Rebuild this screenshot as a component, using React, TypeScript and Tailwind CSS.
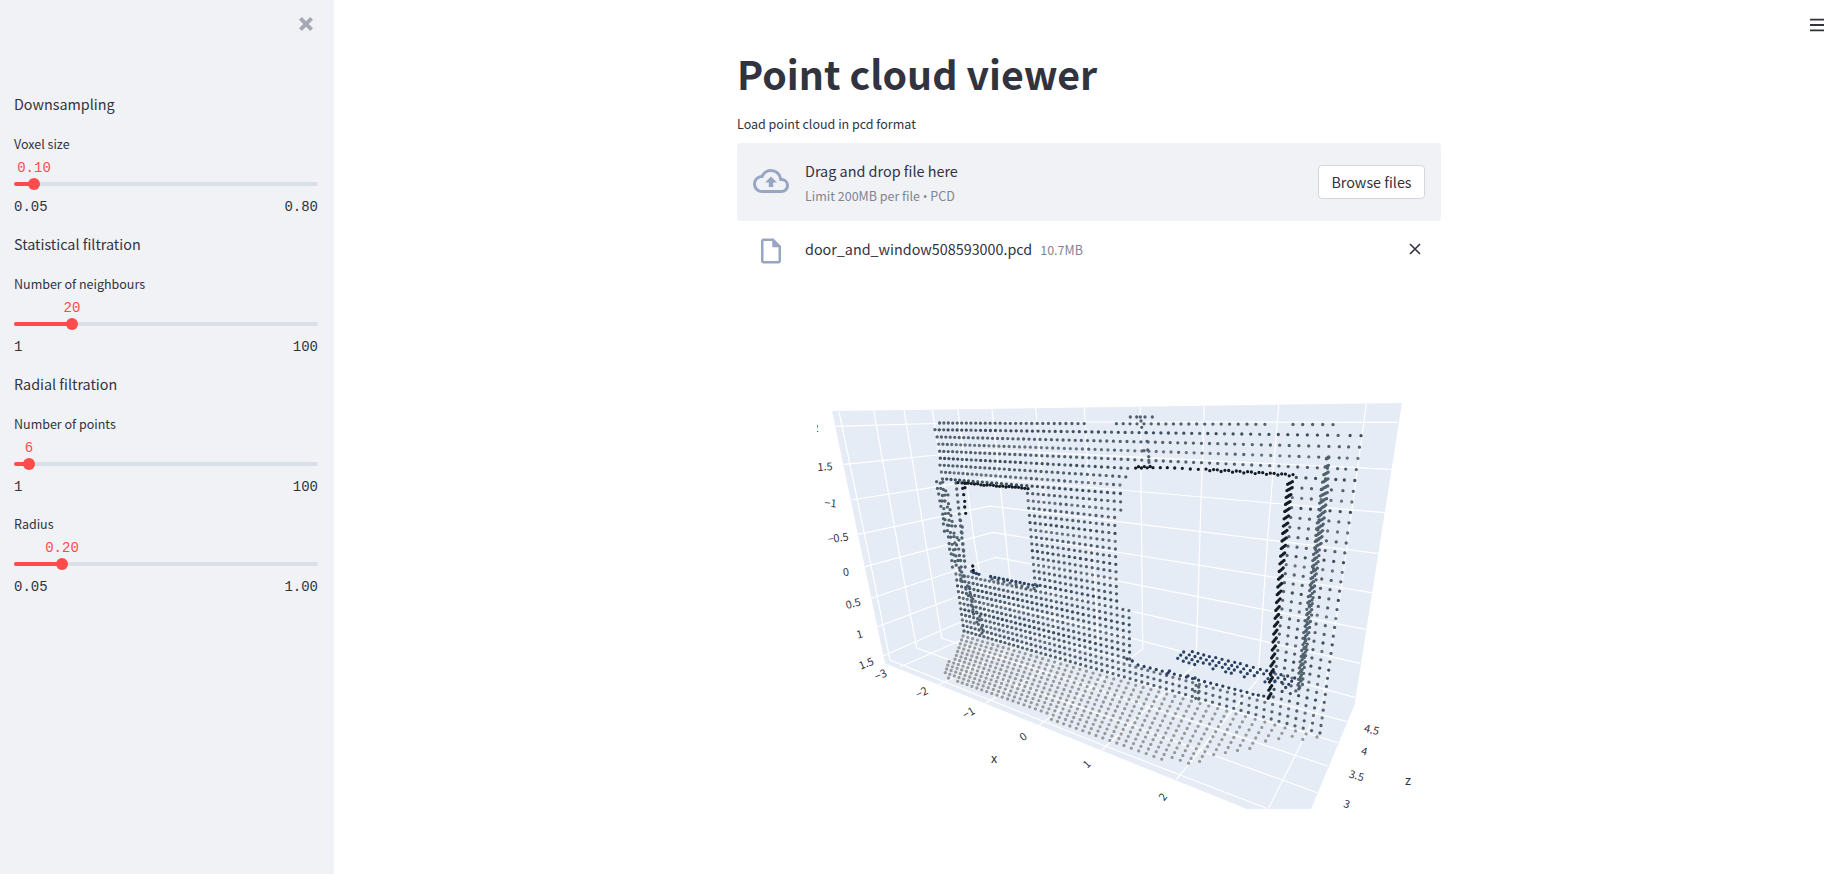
import React from "react";
import { MdOutlineCloudUpload, MdOutlineInsertDriveFile } from "react-icons/md";

type Pt = [number, number];
type Dot = { x: number; y: number };
type Layer = { color: string; dots: Dot[] };

const SANS = "font-['Noto_Sans_CJK_SC','Open_Sans',sans-serif]";

/* ---------- geometry helpers ---------- */

function makeRandom(seed: number) {
  let s = seed;
  return () => {
    s = (s * 1664525 + 1013904223) % 4294967296;
    return s / 4294967296;
  };
}

/* Projective map of the unit square onto the quad a (0,0), b (1,0), c (1,1), d (0,1). */
function project(a: Pt, b: Pt, c: Pt, d: Pt) {
  const dx1 = b[0] - c[0];
  const dx2 = d[0] - c[0];
  const dy1 = b[1] - c[1];
  const dy2 = d[1] - c[1];
  const sx = a[0] - b[0] + c[0] - d[0];
  const sy = a[1] - b[1] + c[1] - d[1];
  const det = dx1 * dy2 - dx2 * dy1;
  const g = (sx * dy2 - dx2 * sy) / det;
  const h = (dx1 * sy - sx * dy1) / det;
  return (u: number, v: number): Dot => {
    const w = g * u + h * v + 1;
    return {
      x: ((b[0] - a[0] + g * b[0]) * u + (d[0] - a[0] + h * d[0]) * v + a[0]) / w,
      y: ((b[1] - a[1] + g * b[1]) * u + (d[1] - a[1] + h * d[1]) * v + a[1]) / w,
    };
  };
}

function inside(p: Dot, poly: Pt[]) {
  let hit = false;
  for (let i = 0, j = poly.length - 1; i < poly.length; j = i++) {
    const [xi, yi] = poly[i];
    const [xj, yj] = poly[j];
    if (yi > p.y !== yj > p.y && p.x < ((xj - xi) * (p.y - yi)) / (yj - yi) + xi) hit = !hit;
  }
  return hit;
}

function run(a: Pt, b: Pt, n: number): Dot[] {
  return Array.from({ length: n }, (_, i) => ({
    x: a[0] + ((b[0] - a[0]) * i) / (n - 1),
    y: a[1] + ((b[1] - a[1]) * i) / (n - 1),
  }));
}

/* ---------- point cloud ---------- */

const WINDOW: Pt[] = [[925, 479], [962, 482], [1026, 487], [1030, 540], [1033, 584], [1000, 578], [970, 571], [925, 566]];
const DOOR: Pt[] = [[1131, 463], [1292, 472], [1290, 480], [1271, 700], [1245, 693], [1131, 663], [1130, 605], [1122, 604], [1120.5, 484], [1131, 478]];
const FLOOR: Pt[] = [[961.5, 633], [1325, 735], [1319, 742], [1307, 742], [1279, 740], [1254, 748], [1222, 756], [1206, 760], [1190, 766], [1145, 756], [1096, 737], [1047, 718], [1040, 711], [1023, 709], [957, 683], [954, 679], [947, 679], [943, 671], [945.5, 661], [952, 659], [955.5, 644], [960, 641]];

function buildCloud(): Layer[] {
  const rnd = makeRandom(7);
  const light: Dot[] = [];
  const mid: Dot[] = [];
  const dark: Dot[] = [];
  const floor: Dot[] = [];
  const navy: Dot[] = [];
  const black: Dot[] = [];
  const strip: Dot[] = [];

  const floorAt = project([963, 636], [1317, 737], [1281, 796], [948.5, 678]);
  for (let j = 0; j < 20; j++) {
    for (let i = -2; i <= 51; i++) {
      const p = floorAt(i / 49, j / 11);
      if (inside(p, FLOOR)) floor.push(p);
    }
  }

  const wallAt = project([935.6, 429.7], [1361, 435.7], [1320, 733], [964, 631]);
  const darkRows = [0, 4, 7, 12, 16, 21, 24, 28];
  const lightRows = [2, 6, 9, 13, 18, 22, 26, 30];
  for (let j = 0; j <= 32; j++) {
    const shift = j < 8 ? (rnd() - 0.5) * 0.5 : 0;
    for (let i = 0; i <= 62; i++) {
      const p = wallAt((i + shift * (i < 61 ? 1 : 0)) / 62, j / 32);
      if (inside(p, WINDOW) || inside(p, DOOR)) continue;
      const r = rnd();
      const target = darkRows.includes(j) ? (r < 0.75 ? dark : mid) : lightRows.includes(j) ? (r < 0.75 ? light : mid) : mid;
      target.push(p);
    }
  }
  for (let i = 0; i <= 62; i++) {
    const x = wallAt(i / 62, 0).x + 4;
    if (x > 1342 || (x > 1085 && x < 1114) || (x > 1272 && x < 1286)) continue;
    mid.push({ x, y: 423 + (x - 940) * 0.004 });
  }
  [[91, 81], [110, 81], [121, 81], [135, 81], [157, 81], [123, 93], [125, 112], [138, 128], [141, 154], [143, 180], [146, 200], [147, 217], [132, 182]].forEach(
    ([x, y]) => mid.push({ x: 1100 + x / 3, y: 390 + y / 3 }),
  );

  /* side reveal left of the window */
  const reveal: [number, number, number][] = [
    [937, 482, 3], [938, 488, 4], [939, 494, 4], [940, 501, 4], [941, 507, 4], [942, 513, 4], [943, 519, 4], [944, 525, 5],
    [945, 531, 4], [948, 537, 5], [949, 543, 4], [950, 549, 4], [951, 555, 4], [952, 560, 4], [953, 566, 4],
  ];
  reveal.forEach(([x, y, n], k) => {
    for (let i = 0; i < n; i++) strip.push({ x: x + i * 2.8 + (rnd() - 0.5) * 1.6, y: y + i * 0.5 + (rnd() - 0.5) * 3 });
    mid.push({ x: 956 + k * 0.66, y: y + 1 });
  });
  for (let k = 0; k < 26; k++) strip.push({ x: 960 + k * 0.92 + (rnd() - 0.5) * 6, y: 570 + k * 2.5 + (rnd() - 0.5) * 3 });

  /* window frame */
  black.push(...run([958, 482.6], [966, 483.2], 3));
  run([965, 483.3], [1028, 488.4], 21).forEach((p) => black.push({ x: p.x, y: p.y + (rnd() - 0.5) * 1.2 }));
  [[488, 295], [495, 293], [491, 314], [494, 334], [494, 351], [497, 370], [518, 528], [520, 541]].forEach(([x, y]) =>
    black.push({ x: 800 + x / 3, y: 390 + y / 3 }),
  );
  strip.push({ x: 962.3, y: 527 }, { x: 960.6, y: 520.6 }, { x: 962, y: 533 }, { x: 963, y: 544 }, { x: 963.6, y: 551 });
  navy.push(...run([973.5, 572.5], [979, 574.3], 3), ...run([990.6, 576.5], [1037, 586], 12));
  mid.push(...run([992, 579], [1034, 588.5], 8));

  /* door frame: lintel, sill, right jamb */
  run([1135.6, 467.6], [1153, 467.2], 7).forEach((p, i) => black.push({ x: p.x, y: p.y + (i % 2 ? -0.8 : 0.5) }));
  [[181, 233], [202, 233], [224, 234], [247, 235], [271, 237], [295, 238]].forEach(([x, y]) => black.push({ x: 1100 + x / 3, y: 390 + y / 3 }));
  run([1206, 469.5], [1293, 475], 24).forEach((p, i) => black.push({ x: p.x, y: p.y + (i % 3 === 1 ? 1 : -0.4) }));
  for (let k = 0; k < 29; k++) {
    const t = k / 28;
    const y = 483 + 213 * Math.pow(t, 1.06);
    const x = 1290 - 20.5 * t;
    const w = 2.4 - 1.0 * t;
    const h = 1.3 + 1.0 * t;
    [-1, -0.33, 0.33, 1].forEach((q) => black.push({ x: x + q * w, y: y - q * h }));
  }
  for (let k = 0; k < 38; k++) {
    const t = k / 37;
    const y = 458 + 229 * Math.pow(t, 0.92);
    const x = 1327.5 - 27.5 * t;
    const q0 = Math.min(1, 0.35 + k * 0.15);
    const n = k < 14 ? [-1, -0.6, -0.2, 0.2, 0.6, 1] : [-1, -0.45, 0.1, 0.7];
    n.forEach((q) =>
      strip.push({ x: x + q * 3.4 * q0 + (rnd() - 0.5) * t * 1.6, y: y - q * (1.8 + 2 * t) * q0 + (rnd() - 0.5) * 0.8 }),
    );
  }
  navy.push(...run([1127, 659], [1132.3, 661], 2), ...run([1138, 665], [1247, 692.3], 19), ...run([1253, 694.3], [1269, 697], 4));
  navy.push({ x: 1169.5, y: 671 }, { x: 1167, y: 674 }, { x: 1188, y: 676 }, { x: 1195, y: 678 });
  [[288, 316], [296, 321], [285, 334], [295, 338], [287, 355], [296, 357]].forEach(([x, y]) => mid.push({ x: 1100 + x / 3, y: 580 + y / 3 }));

  /* dark patch on the ground behind the door */
  const patch: [number, number, number][] = [
    [251, 216, 3], [277, 215, 4], [294, 220, 4], [311, 225, 4], [328, 230, 3], [347, 233, 3], [366, 238, 4], [385, 243, 3], [404, 247, 4],
    [421, 251, 4], [440, 257, 3], [460, 262, 4], [481, 268, 3], [500, 272, 2], [522, 277, 4], [543, 284, 3], [563, 288, 3], [584, 294, 4],
  ];
  patch.forEach(([x, y, n]) => {
    for (let i = 0; i < n; i++) navy.push({ x: 1100 + (x - i * 9) / 3, y: 580 + (y + i * 9.5) / 3 });
  });

  return [
    { color: "#999999", dots: floor },
    { color: "#66737e", dots: light },
    { color: "#52616d", dots: mid },
    { color: "#3d4e5c", dots: dark },
    { color: "#51626e", dots: strip },
    { color: "#2a4164", dots: navy },
    { color: "#161c26", dots: black },
  ];
}

const CLOUD = buildCloud();

const dotPath = (dots: Dot[]) => dots.map((d) => `M${d.x.toFixed(1)} ${d.y.toFixed(1)}h.01`).join("");

/* ---------- scene grid ---------- */

const GRID: Pt[][] = [
  /* depth lines: left wall, then floor */
  [[839, 411.7], [874, 580], [890, 660], [1100, 744], [1267, 808.5]],
  [[873.7, 410.7], [904, 580], [916.7, 648], [1317.3, 792.7]],
  [[904, 410], [932, 580], [941.7, 638], [1327.7, 766]],
  [[932.3, 409.3], [966, 629], [1338, 742.7]],
  [[957.7, 409], [973.5, 537], [988, 622], [1346.7, 721.7]],
  /* width lines: right wall, then floor */
  [[992, 409], [1001.7, 500], [1014, 617], [900, 667]],
  [[1035.7, 408], [1055, 628], [938.3, 685]],
  [[1084.3, 407.3], [1098, 640], [985, 703.3]],
  [[1140.3, 406.7], [1142.7, 649], [1038.3, 725.7]],
  [[1204.3, 406], [1200, 533], [1196, 664], [1101.7, 750]],
  [[1278.7, 405], [1268, 533], [1258, 679], [1176, 780]],
  [[1366.3, 404], [1341, 590], [1323, 700], [1268.5, 808.5]],
  /* height lines across both walls */
  [[835, 426.3], [986, 422], [1398, 422.3]],
  [[844, 464.3], [987, 450], [1391.7, 469.3]],
  [[851, 500], [988, 478.6], [1385, 512.7]],
  [[858.3, 534.3], [990, 506], [1377.7, 553.3]],
  [[865, 566.7], [992.7, 532.3], [1371.7, 592.7]],
  [[871, 598.3], [996, 557.3], [1365.7, 629.3]],
  [[877.3, 626.7], [999, 581], [1360, 663.3]],
  [[883, 656], [1002, 604], [1355, 697.3]],
];

const TICKS: [string, number, number, number][] = [
  ["2", 815.5, 428, -2],
  ["1.5", 825, 466.5, -4],
  ["−1", 830.5, 503, 5],
  ["−0.5", 838, 537.8, -8],
  ["0", 845.8, 571.8, -8],
  ["0.5", 853, 603.3, -14],
  ["1", 859.6, 634.2, -16],
  ["1.5", 866.2, 663.3, -22],
  ["−3", 880.6, 674.7, -24],
  ["−2", 921.6, 692.5, -28],
  ["−1", 968.6, 712.8, -32],
  ["0", 1023, 736.6, -36],
  ["1", 1086.7, 764.1, -44],
  ["2", 1162.8, 796.6, -52],
  ["4.5", 1371.7, 729.6, 13],
  ["4", 1364.5, 751.1, 14],
  ["3.5", 1356.6, 775.4, 16],
  ["3", 1346.8, 803.8, 18],
];

function Scene() {
  return (
    <svg viewBox="817 356 624 465" className="ml-20 block h-[465px] w-[624px]">
      <polygon points="832,411 1402,403 1354.5,705 1311,809 1247,809 885,663.3" fill="#e5ecf6" />
      {GRID.map((line, i) => (
        <polyline key={i} points={line.map((p) => p.join(",")).join(" ")} fill="none" stroke="#ffffff" strokeWidth={1.2} />
      ))}
      {CLOUD.map((layer) => (
        <path key={layer.color} d={dotPath(layer.dots)} stroke={layer.color} strokeWidth={3.3} strokeLinecap="round" fill="none" />
      ))}
      <g fill="#31333f" fontSize={10.8} textAnchor="middle" className="font-['Noto_Sans_CJK_SC','Open_Sans',sans-serif]">
        {TICKS.map(([label, x, y, angle], i) => (
          <text key={i} x={x} y={y + 4} transform={`rotate(${angle} ${x} ${y})`}>
            {label}
          </text>
        ))}
        <text x={994} y={762.5} fontSize={12.5}>x</text>
        <text x={1408} y={785} fontSize={12.5}>z</text>
      </g>
    </svg>
  );
}

/* ---------- sidebar ---------- */

type SliderProps = { label: string; value: string; min: string; max: string; at: number };

function Slider({ label, value, min, max, at }: SliderProps) {
  return (
    <div className="flex h-[84px] flex-col">
      <div className="h-6 text-[12.5px] leading-6">{label}</div>
      <div className="relative h-[30px]">
        <span
          className="absolute top-px -translate-x-1/2 font-['Liberation_Mono',monospace] text-sm leading-[22px] text-[#ff4b4b]"
          style={{ left: at }}
        >
          {value}
        </span>
        <div className="absolute bottom-0 h-1 w-full overflow-hidden rounded-sm bg-[#dadfe9]">
          <div className="h-full bg-[#ff4b4b]" style={{ width: at }} />
        </div>
        <div className="absolute -bottom-1 size-3 -translate-x-1/2 rounded-full bg-[#ff4b4b]" style={{ left: at }} />
      </div>
      <div className="mt-[11px] flex h-[19px] justify-between font-['Liberation_Mono',monospace] text-sm leading-5">
        <span>{min}</span>
        <span>{max}</span>
      </div>
    </div>
  );
}

const Heading = ({ children }: { children: React.ReactNode }) => <p className="h-6 text-[14.35px] leading-6">{children}</p>;

function Sidebar() {
  return (
    <aside className="flex w-[334px] shrink-0 flex-col bg-[#f0f2f6]">
      <div className="flex h-[92px] justify-end pt-[17px] pr-[21px]">
        <svg viewBox="0 0 14 14" className="size-3.5">
          <path d="M1.4 1.4 12.6 12.6M12.6 1.4 1.4 12.6" stroke="#a6a9b3" strokeWidth={4} />
        </svg>
      </div>
      <div className="flex flex-col gap-4 pr-4 pl-3.5">
        <Heading>Downsampling</Heading>
        <Slider label="Voxel size" value="0.10" min="0.05" max="0.80" at={20} />
        <Heading>Statistical filtration</Heading>
        <Slider label="Number of neighbours" value="20" min="1" max="100" at={58} />
        <Heading>Radial filtration</Heading>
        <Slider label="Number of points" value="6" min="1" max="100" at={15} />
        <Slider label="Radius" value="0.20" min="0.05" max="1.00" at={48} />
      </div>
    </aside>
  );
}

/* ---------- main column ---------- */

function Uploader() {
  return (
    <section>
      <div className="flex h-[78px] items-center rounded bg-[#f0f2f6] pr-4 pl-4">
        <MdOutlineCloudUpload className="mb-0.5 size-9 text-[#97a6c3]" />
        <div className="ml-4 grow pt-0.5">
          <div className="h-6 text-[14.4px] leading-6">Drag and drop file here</div>
          <div className="h-6 text-[12.5px] leading-[25px] text-[#83858f]">
            Limit 200MB per file <span className="font-['Open_Sans',sans-serif]">•</span> PCD
          </div>
        </div>
        <button className="h-[34px] w-[107px] rounded border border-[#d6d7dc] bg-white text-[14.35px] leading-8">Browse files</button>
      </div>
      <div className="flex h-14 items-center pr-5 pl-[19px]">
        <MdOutlineInsertDriveFile className="mt-1 size-[30px] text-[#97a6c3]" />
        <div className="ml-[19px] flex grow items-baseline gap-2">
          <span className="text-[14.35px] leading-6">door_and_window508593000.pcd</span>
          <span className="text-[12.5px] leading-6 text-[#83858f]">10.7MB</span>
        </div>
        <svg viewBox="0 0 12 12" className="size-3">
          <path d="M1 1 11 11M11 1 1 11" stroke="#31333f" strokeWidth={1.6} />
        </svg>
      </div>
    </section>
  );
}

export default function App() {
  return (
    <div className={`flex h-[874px] w-full overflow-hidden bg-white text-[#31333f] ${SANS}`}>
      <Sidebar />
      <main className="flex grow">
        <div className="ml-[403px] w-[704px] pt-[46px]">
          <h1 className="h-[53px] text-[39.3px] leading-[53px] font-bold">Point cloud viewer</h1>
          <p className="mt-[13px] mb-[7px] h-6 text-[12.5px] leading-6">Load point cloud in pcd format</p>
          <Uploader />
          <div className="h-[79px]" />
          <Scene />
        </div>
        <div className="flex grow justify-end pt-[18px] pr-4">
          <svg viewBox="0 0 14 14" className="size-3.5">
            <path d="M0 1.7H14M0 7H14M0 12.3H14" stroke="#31333f" strokeWidth={1.8} />
          </svg>
        </div>
      </main>
    </div>
  );
}
